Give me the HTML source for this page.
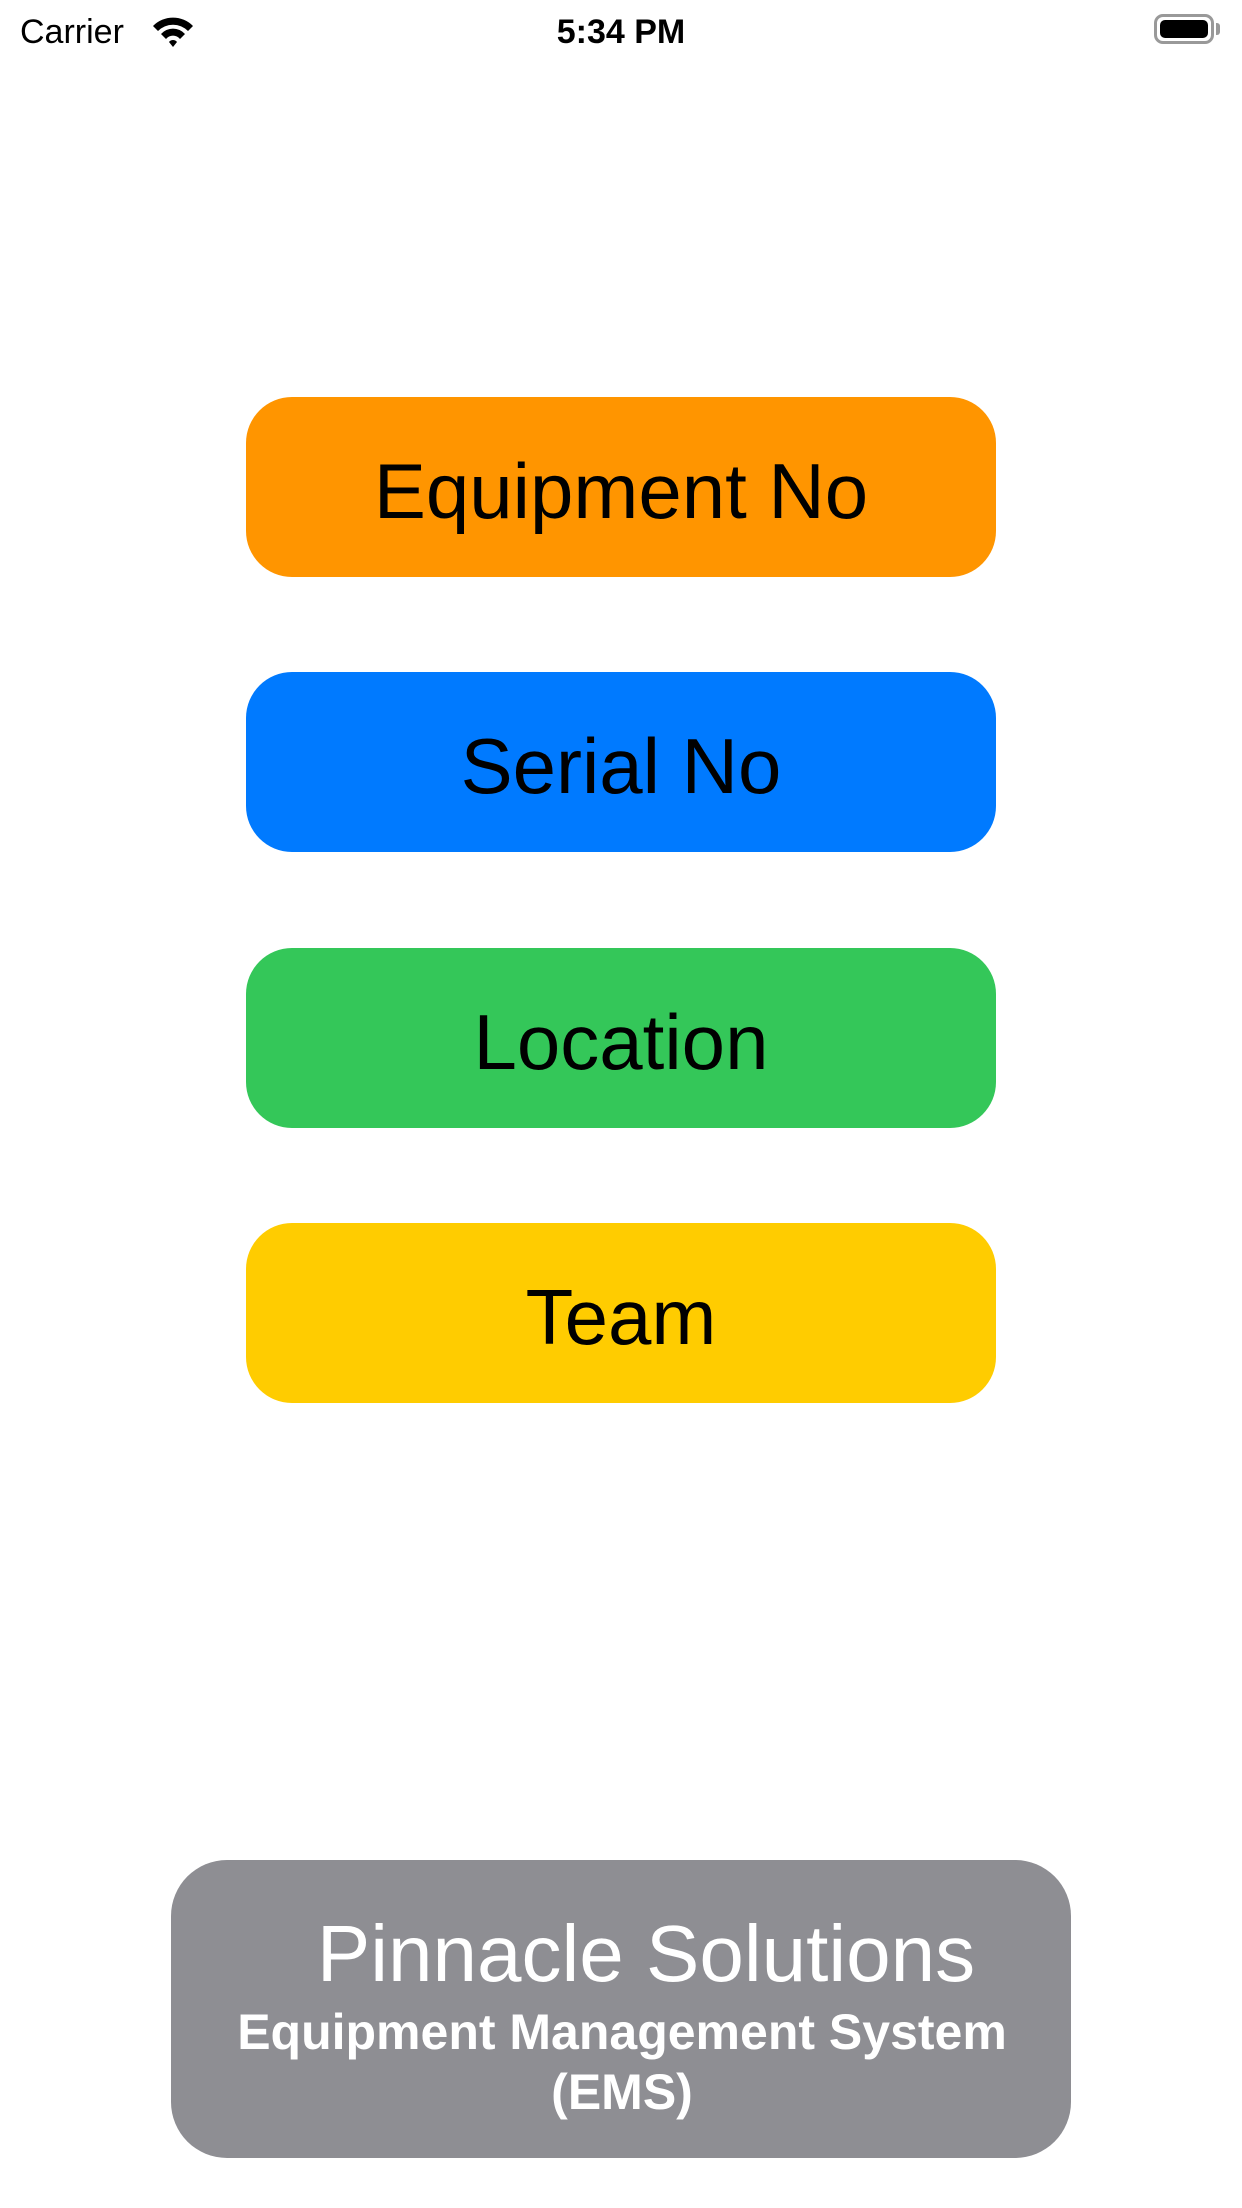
<!DOCTYPE html>
<html><head><meta charset="utf-8"><style>
body{margin:0;width:1242px;height:2208px;background:#fff;position:relative;font-family:"Liberation Sans",sans-serif;overflow:hidden}
.b{position:absolute;left:246px;width:750px;height:180px;border-radius:46px;display:flex;align-items:center;justify-content:center;font-size:78px;color:#000;padding-top:8px;box-sizing:border-box}
.sb{position:absolute;top:13px;font-size:34px;color:#000}
</style></head><body>
<div class="sb" style="left:20px">Carrier</div>
<svg style="position:absolute;left:150px;top:14px" width="46" height="36" viewBox="0 0 46 36"><path d="M3 12 A28 28 0 0 1 43 12 L38 17 A21 21 0 0 0 8 17 Z M11 20 A16 16 0 0 1 35 20 L30 25 A9 9 0 0 0 16 25 Z M19 28 L23 33 L27 28 A5 5 0 0 0 19 28 Z" fill="#000"/></svg>
<div class="sb" style="left:0;width:1242px;text-align:center;font-weight:bold;font-size:34px">5:34 PM</div>
<div style="position:absolute;left:1154px;top:14px;width:60px;height:30px;border:3px solid #999;border-radius:9px;box-sizing:border-box"><div style="margin:3px;height:18px;background:#000;border-radius:5px"></div></div>
<div style="position:absolute;left:1216px;top:23px;width:4px;height:12px;background:#999;border-radius:0 3px 3px 0"></div>
<div class="b" style="top:397px;background:#ff9500">Equipment No</div>
<div class="b" style="top:672px;background:#007aff">Serial No</div>
<div class="b" style="top:948px;background:#34c759">Location</div>
<div class="b" style="top:1223px;background:#ffcc00">Team</div>
<div style="position:absolute;left:171px;top:1860px;width:900px;height:298px;border-radius:56px;background:#8e8e93;color:#fff;text-align:center">
<div style="position:absolute;left:0;right:0;top:48px;font-size:80px;padding-left:50px">Pinnacle Solutions</div>
<div style="position:absolute;left:0;right:0;top:142px;font-size:50px;font-weight:bold;line-height:60px;padding-left:2px">Equipment Management System<br>(EMS)</div>
</div>
</body></html>
